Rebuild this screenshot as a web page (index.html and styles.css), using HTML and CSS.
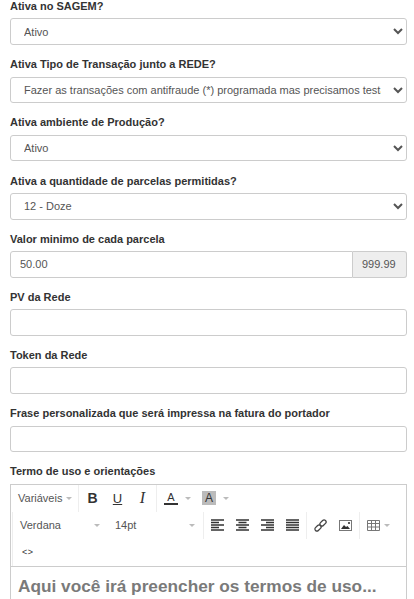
FILE: index.html
```html
<!DOCTYPE html>
<html lang="pt-BR">
<head>
  <meta charset="UTF-8">
  <meta name="viewport" content="width=device-width, initial-scale=1.0">
  <title>Configuração da Rede</title>
  <link rel="stylesheet" href="styles.css">
</head>

<body>
  <form class="settings">
    <div class="form-group">
      <label for="sagem">Ativa no SAGEM?</label>
      <select id="sagem" class="form-control"><option>Ativo</option><option>Inativo</option></select>
    </div>

    <div class="form-group">
      <label for="tipo">Ativa Tipo de Transação junto a REDE?</label>
      <select id="tipo" class="form-control"><option>Fazer as transações com antifraude (*) programada mas precisamos testar antes</option></select>
    </div>

    <div class="form-group">
      <label for="producao">Ativa ambiente de Produção?</label>
      <select id="producao" class="form-control"><option>Ativo</option><option>Inativo</option></select>
    </div>

    <div class="form-group">
      <label for="parcelas">Ativa a quantidade de parcelas permitidas?</label>
      <select id="parcelas" class="form-control"><option>12 - Doze</option></select>
    </div>

    <div class="form-group">
      <label for="minimo">Valor minimo de cada parcela</label>
      <div class="input-group">
        <input id="minimo" class="form-control" type="text" value="50.00">
        <span class="input-addon">999.99</span>
      </div>
    </div>

    <div class="form-group">
      <label for="pv">PV da Rede</label>
      <input id="pv" class="form-control" type="text">
    </div>

    <div class="form-group">
      <label for="token">Token da Rede</label>
      <input id="token" class="form-control" type="text">
    </div>

    <div class="form-group">
      <label for="frase">Frase personalizada que será impressa na fatura do portador</label>
      <input id="frase" class="form-control" type="text">
    </div>

    <div class="form-group">
      <label>Termo de uso e orientações</label>
      <div class="editor">
        <div class="toolbar">
          <div class="tool-row">
            <div class="tool-group group-vars">
              <span class="tool-text">Variáveis</span><i class="caret"></i>
            </div>
            <div class="tool-group group-style">
              <span class="tool tool-b">B</span>
              <span class="tool tool-u">U</span>
              <span class="tool tool-i">I</span>
            </div>
            <div class="tool-group group-color">
              <span class="tool-color"><span class="letter-a">A</span><i class="caret"></i></span>
              <span class="tool-color"><span class="letter-a letter-a-bg">A</span><i class="caret"></i></span>
            </div>
          </div>
          <div class="tool-row tool-row-inner">
            <div class="tool-group group-font">
              <span class="tool-select font-name">Verdana<i class="caret"></i></span>
              <span class="tool-select font-size">14pt<i class="caret"></i></span>
            </div>
            <div class="tool-group group-align">
              <span class="tool"><svg width="13" height="12" viewBox="0 0 13 12"><path class="lines" d="M0 1h13M0 3.500h8M0 6h13M0 8.500h8M0 11h13"/></svg></span>
              <span class="tool"><svg width="13" height="12" viewBox="0 0 13 12"><path class="lines" d="M0 1h13M2.500 3.500h8M0 6h13M2.500 8.500h8M0 11h13"/></svg></span>
              <span class="tool"><svg width="13" height="12" viewBox="0 0 13 12"><path class="lines" d="M0 1h13M5 3.500h8M0 6h13M5 8.500h8M0 11h13"/></svg></span>
              <span class="tool"><svg width="13" height="12" viewBox="0 0 13 12"><path class="lines" d="M0 1h13M0 3.500h13M0 6h13M0 8.500h13M0 11h13"/></svg></span>
            </div>
            <div class="tool-group group-insert">
              <span class="tool"><svg width="13" height="13" viewBox="0 0 13 13"><g class="outline outline-link"><rect x="7" y="0.500" width="4" height="7" rx="2" transform="rotate(45 9 4)"/><rect x="2" y="5.500" width="4" height="7" rx="2" transform="rotate(45 4 9)"/></g></svg></span>
              <span class="tool"><svg width="13" height="11" viewBox="0 0 13 11"><rect class="outline outline-soft" x="0.500" y="0.500" width="12" height="10"/><path class="solid" d="M2 9l3-4 2 2 1.500-1L11 9z"/><circle class="solid" cx="10" cy="3" r="1.100"/></svg></span>
            </div>
            <div class="tool-group group-table">
              <svg width="13" height="11" viewBox="0 0 13 11"><path class="outline outline-soft" d="M.5.500h12v10H.5zM.5 3.500h12M.5 7h12M4.500.500v10M8.500.500v10"/></svg><i class="caret"></i>
            </div>
          </div>
          <div class="tool-row tool-row-inner">
            <div class="tool-group group-code">&lt;&gt;</div>
          </div>
        </div>
        <div class="editor-body">
          <h2>Aqui você irá preencher os termos de uso...</h2>
        </div>
      </div>
    </div>
  </form>
</body>
</html>
```

FILE: styles.css
```css
* {
  box-sizing: border-box;
}

html, body {
  height: 100%;
  overflow: hidden;
}

body {
  margin: 0;
  font-family: "Liberation Sans", Arial, sans-serif;
  font-size: 11px;
  color: #555;
  background: #fff;
}

.settings {
  padding: 0 7px 0 10px;
}

.form-group {
  margin-bottom: 13.2px;
}

label {
  display: block;
  height: 18.33px;
  line-height: 13px;
  font-size: 11px;
  font-weight: 700;
  color: #333;
}

.form-control {
  display: block;
  width: 100%;
  height: 26.67px;
  padding: 0 9px;
  border: 1px solid #ccc;
  border-radius: 3px;
  background-color: #fff;
  font-family: inherit;
  font-size: 11px;
  color: #555;
}

.input-group {
  display: flex;
}

.input-group .form-control {
  flex: 1;
  min-width: 0;
  border-radius: 3px 0 0 3px;
}

.input-addon {
  display: flex;
  align-items: center;
  width: 54px;
  padding-left: 9px;
  border: 1px solid #ccc;
  border-left: 0;
  border-radius: 0 3px 3px 0;
  background: #eee;
}

.editor {
  border: 1px solid #ccc;
}

.toolbar {
  border-bottom: 1px solid #ccc;
}

.tool-row {
  display: flex;
  height: 27px;
}

.tool-row-inner {
  margin-left: 1px;
  border-left: 1px solid #eee;
}

.tool-group {
  display: flex;
  align-items: center;
}

.group-vars {
  width: 68px;
  padding-left: 7px;
  border-right: 1px solid #eee;
}

.group-style {
  justify-content: center;
  width: 78px;
  border-right: 1px solid #eee;
}

.group-color {
  width: 76px;
}

.group-font {
  width: 191px;
  border-right: 1px solid #eee;
}

.group-align {
  justify-content: center;
  width: 103px;
  border-right: 1px solid #eee;
}

.group-insert {
  justify-content: center;
  width: 53px;
  border-right: 1px solid #eee;
}

.group-table {
  padding-left: 7px;
}

.group-code {
  padding-left: 9px;
  font-size: 9px;
  letter-spacing: 0.5px;
  color: #333;
}

.tool {
  display: flex;
  align-items: center;
  justify-content: center;
  width: 25px;
  height: 27px;
  color: #333;
}

.tool-b {
  font-size: 14px;
  font-weight: 700;
}

.tool-u {
  font-size: 13px;
  text-decoration: underline;
}

.tool-i {
  font-family: "Liberation Serif", serif;
  font-size: 16px;
  font-style: italic;
}

.tool-color {
  display: flex;
  align-items: center;
  width: 38px;
  padding-left: 7px;
}

.letter-a {
  width: 14px;
  border-bottom: 2px solid #333;
  font-size: 11px;
  line-height: 11px;
  text-align: center;
  color: #333;
}

.letter-a-bg {
  border-bottom: 0;
  font-size: 12px;
  line-height: 14px;
  background: #bbb;
}

.caret {
  flex: none;
  width: 0;
  height: 0;
  margin-left: 4px;
  border-top: 3px solid #bbb;
  border-left: 3px solid transparent;
  border-right: 3px solid transparent;
}

.tool-color .caret {
  margin-left: 7px;
}

.tool-select {
  display: flex;
  align-items: center;
  justify-content: space-between;
}

.font-name {
  width: 87px;
  padding-left: 7px;
}

.font-size {
  width: 95px;
  padding-left: 15px;
}

.lines {
  fill: none;
  stroke: #333;
  stroke-width: 1.5;
}

.outline {
  fill: none;
  stroke: #444;
  stroke-width: 1;
}

.outline-link {
  stroke-width: 1.3;
}

.outline-soft {
  stroke: #777;
}

.solid {
  fill: #333;
}

.editor-body {
  padding: 9px 7px;
}

.editor-body h2 {
  margin: 0;
  font-family: "Liberation Sans", Arial, sans-serif;
  font-size: 17.25px;
  line-height: 20px;
  font-weight: 700;
  color: #7a7a7a;
  white-space: nowrap;
}
```
